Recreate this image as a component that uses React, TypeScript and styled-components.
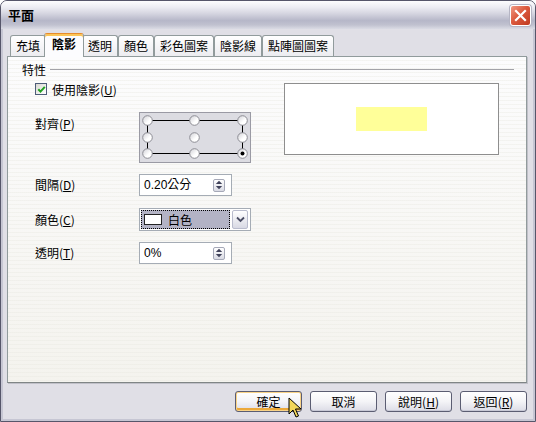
import React from 'react';
import styled, { createGlobalStyle } from 'styled-components';

const FONT = `"Noto Sans CJK TC", "Liberation Sans", sans-serif`;

const Global = createGlobalStyle`
  html, body { margin: 0; padding: 0; background: #ffffff; }
  body { font-family: ${FONT}; font-size: 12px; color: #000; }
  * { box-sizing: border-box; }
  u { text-decoration-thickness: 1px; text-underline-offset: 1px; }
`;

const Window = styled.div`
  position: relative;
  width: 536px;
  height: 422px;
  display: flex;
  flex-direction: column;
  border: 1px solid #56566a;
  border-radius: 7px 7px 0 0;
  overflow: hidden;
  background: #e0dfe6;
`;

const TitleBar = styled.div`
  height: 28px;
  flex: none;
  display: flex;
  align-items: center;
  justify-content: space-between;
  padding: 0 4px 0 7px;
  background: linear-gradient(#fdfdfe 0%, #ededf3 22%, #d5d5e0 45%, #b6b7c8 70%, #c0c1cf 85%, #dadbe4 100%);
`;

const Title = styled.div`
  font-weight: bold;
  font-size: 13px;
  line-height: 14px;
  color: #000;
`;

const CloseButton = styled.div`
  width: 21px;
  height: 21px;
  border: 1px solid #ffffff;
  border-radius: 3px;
  background: linear-gradient(135deg, #f09a84 0%, #dc5a3e 45%, #c03a20 100%);
  box-shadow: 0 0 0 1px #b5b5c4;
  display: flex;
  align-items: center;
  justify-content: center;
`;

const Body = styled.div`
  flex: 1;
  display: flex;
  flex-direction: column;
  border: 2px solid #c6c6d3;
  border-top: none;
  padding: 4px 6px 7px 4px;
`;

const TabStrip = styled.div`
  height: 23px;
  flex: none;
  display: flex;
  align-items: flex-end;
  padding-left: 3px;
  position: relative;
  z-index: 1;
`;

const Tab = styled.div<{ $active?: boolean }>`
  height: ${p => (p.$active ? '24px' : '21px')};
  margin: ${p => (p.$active ? '0 -2px -1px -2px' : '0')};
  padding: ${p => (p.$active ? '2px 7px 0' : '2px 5px 0')};
  border: 1px solid #919b9c;
  border-bottom: none;
  border-top-color: ${p => (p.$active ? '#e68b2c' : '#919b9c')};
  border-radius: 3px 3px 0 0;
  background: ${p => (p.$active ? '#fcfcfe' : 'linear-gradient(#ffffff, #ececf0)')};
  box-shadow: ${p => (p.$active ? 'inset 0 2px 0 #fbc456' : 'none')};
  font-weight: ${p => (p.$active ? 'bold' : 'normal')};
  line-height: 16px;
  white-space: nowrap;
  position: relative;
  z-index: ${p => (p.$active ? 2 : 1)};
`;

const Panel = styled.div`
  flex: 1;
  border: 1px solid #919b9c;
  border-bottom-color: #7f8585;
  box-shadow: 1px 1px 0 #c0c0c8;
  background:
    repeating-linear-gradient(180deg, rgba(255,255,255,0) 0px, rgba(255,255,255,0) 3px, rgba(230,230,222,0.35) 3px, rgba(230,230,222,0.35) 4px),
    linear-gradient(#fcfcfd, #f4f3ee);
  padding: 5px 12px 0 14px;
`;

const GroupHeader = styled.div`
  height: 14px;
  display: flex;
  align-items: center;
  gap: 4px;
`;

const HeaderLine = styled.div`
  flex: 1;
  height: 1px;
  background: #a3a3a8;
`;

const Section = styled.div`
  display: flex;
  align-items: flex-start;
  padding-left: 13px;
  margin-top: 6px;
`;

const LeftCol = styled.div`
  width: 216px;
  display: flex;
  flex-direction: column;
`;

const CheckRow = styled.div`
  height: 14px;
  display: flex;
  align-items: center;
  gap: 5px;
`;

const CheckBox = styled.div`
  width: 12px;
  height: 12px;
  border: 1px solid #4d5c78;
  background: linear-gradient(135deg, #d8d8d2, #ffffff);
  display: flex;
  align-items: center;
  justify-content: center;
`;

const FormRow = styled.div<{ $top: number; $align?: string }>`
  display: flex;
  align-items: ${p => p.$align || 'center'};
  margin-top: ${p => p.$top}px;
`;

const Label = styled.div<{ $padTop?: number }>`
  width: 104px;
  flex: none;
  line-height: 14px;
  padding-top: ${p => p.$padTop || 0}px;
  white-space: nowrap;
`;

const PositionBox = styled.div`
  width: 112px;
  height: 51px;
  border: 1px solid #9a9aa4;
  background: #dcdce2;
  display: flex;
`;

const SpinField = styled.div`
  width: 93px;
  height: 22px;
  border: 1px solid #a5acb5;
  background: #ffffff;
  display: flex;
  align-items: center;
  padding: 0 6px 0 4px;
`;

const FieldText = styled.div`
  flex: 1;
  line-height: 14px;
  font-family: "Liberation Sans", "Noto Sans CJK TC", sans-serif;
  white-space: nowrap;
`;

const SpinButton = styled.div`
  width: 12px;
  height: 13px;
  border: 1px solid #a6a9b8;
  border-radius: 2px;
  background: linear-gradient(#ffffff, #dadbe4);
  display: flex;
  align-items: center;
  justify-content: center;
`;

const Combo = styled.div`
  width: 114px;
  height: 23px;
  border: 1px solid #a5acb5;
  background: #ffffff;
  display: flex;
  align-items: center;
  padding: 1px 2px 1px 1px;
  gap: 2px;
`;

const ComboValue = styled.div`
  flex: 1;
  height: 19px;
  border: 1px dotted #000;
  background: #b3b3c5;
  display: flex;
  align-items: center;
  gap: 6px;
  padding-left: 2px;
`;

const Swatch = styled.div<{ $color: string }>`
  width: 18px;
  height: 11px;
  border: 1px solid #222;
  background: ${p => p.$color};
`;

const ComboButton = styled.div`
  width: 16px;
  height: 19px;
  border: 1px solid #b9bccd;
  border-radius: 2px;
  background: linear-gradient(#ffffff, #d8d9e4);
  display: flex;
  align-items: center;
  justify-content: center;
`;

const Preview = styled.div`
  width: 215px;
  height: 72px;
  margin: 1px 0 0 33px;
  border: 1px solid #8e8e8e;
  background: #ffffff;
  display: flex;
  align-items: center;
  justify-content: center;
`;

const PreviewShape = styled.div`
  width: 71px;
  height: 24px;
  background: #ffff99;
`;

const ButtonRow = styled.div`
  height: 21px;
  margin-top: 8px;
  flex: none;
  display: flex;
  justify-content: flex-end;
  gap: 8px;
`;

const Button = styled.div<{ $default?: boolean }>`
  width: 67px;
  height: 21px;
  border: 1px solid #5b5d72;
  border-radius: 3px;
  background: linear-gradient(#ffffff 0%, #f4f4f7 50%, #dcdce6 100%);
  box-shadow: ${p => (p.$default ? 'inset 0 0 0 1px #f9d387, inset 0 -2px 0 1px #eca93a' : 'inset 0 -1px 0 #c8c9d6')};
  display: flex;
  align-items: center;
  justify-content: center;
  line-height: 14px;
`;

const Cursor = styled.svg`
  position: absolute;
  left: 287px;
  top: 396px;
`;

const Mn: React.FC<{ text: string; k: string }> = ({ text, k }) => (
  <>
    {text}(<u>{k}</u>)
  </>
);

const Circle: React.FC<{ x: number; y: number; on?: boolean }> = ({ x, y, on }) => (
  <g>
    <circle cx={x} cy={y} r={4.8} fill="url(#rg)" stroke="#8c8c94" strokeWidth={1} />
    {on && <circle cx={x} cy={y} r={2} fill="#000" />}
  </g>
);

const PositionGrid: React.FC = () => {
  const xs = [7.5, 54.5, 102.5];
  const ys = [7.5, 24.5, 40.5];
  return (
    <svg width="110" height="49" viewBox="0 0 110 49">
      <defs>
        <linearGradient id="rg" x1="0" y1="0" x2="1" y2="1">
          <stop offset="0" stopColor="#d0d0d6" />
          <stop offset="0.6" stopColor="#ffffff" />
          <stop offset="1" stopColor="#ffffff" />
        </linearGradient>
      </defs>
      <line x1={xs[0]} y1={ys[0]} x2={xs[2]} y2={ys[0]} stroke="#000" strokeWidth={1} />
      <line x1={xs[0]} y1={ys[2]} x2={xs[2]} y2={ys[2]} stroke="#000" strokeWidth={1} />
      <line x1={xs[0]} y1={ys[0]} x2={xs[0]} y2={ys[2]} stroke="#000" strokeWidth={1} />
      <line x1={xs[2]} y1={ys[0]} x2={xs[2]} y2={ys[2]} stroke="#000" strokeWidth={1} />
      {ys.map((y, ri) =>
        xs.map((x, ci) => <Circle key={`${ri}-${ci}`} x={x} y={y} on={ri === 2 && ci === 2} />)
      )}
    </svg>
  );
};

const SpinArrows: React.FC = () => (
  <svg width="8" height="10" viewBox="0 0 8 10">
    <path d="M4 0.8 L7.2 4 L0.8 4 Z" fill="#40425a" />
    <path d="M0.8 6 L7.2 6 L4 9.2 Z" fill="#40425a" />
  </svg>
);

const Spin: React.FC<{ value: string }> = ({ value }) => (
  <SpinField>
    <FieldText>{value}</FieldText>
    <SpinButton>
      <SpinArrows />
    </SpinButton>
  </SpinField>
);

const tabs = ['充填', '陰影', '透明', '顏色', '彩色圖案', '陰影線', '點陣圖圖案'];

export default function App() {
  return (
    <>
      <Global />
      <Window>
        <TitleBar>
          <Title>平面</Title>
          <CloseButton>
            <svg width="13" height="13" viewBox="0 0 13 13">
              <path d="M2 2 L11 11 M11 2 L2 11" stroke="#ffffff" strokeWidth={2.2} strokeLinecap="square" />
            </svg>
          </CloseButton>
        </TitleBar>
        <Body>
          <TabStrip>
            {tabs.map(t => (
              <Tab key={t} $active={t === '陰影'}>
                {t}
              </Tab>
            ))}
          </TabStrip>
          <Panel>
            <GroupHeader>
              <span>特性</span>
              <HeaderLine />
            </GroupHeader>
            <Section>
              <LeftCol>
                <CheckRow>
                  <CheckBox>
                    <svg width="9" height="9" viewBox="0 0 9 9">
                      <path d="M1.3 4.3 L3.5 6.6 L7.8 1.8" stroke="#21a121" strokeWidth={2} fill="none" />
                    </svg>
                  </CheckBox>
                  <span>
                    <Mn text="使用陰影" k="U" />
                  </span>
                </CheckRow>
                <FormRow $top={16} $align="flex-start">
                  <Label $padTop={5}>
                    <Mn text="對齊" k="P" />
                  </Label>
                  <PositionBox>
                    <PositionGrid />
                  </PositionBox>
                </FormRow>
                <FormRow $top={11}>
                  <Label>
                    <Mn text="間隔" k="D" />
                  </Label>
                  <Spin value="0.20公分" />
                </FormRow>
                <FormRow $top={12}>
                  <Label>
                    <Mn text="顏色" k="C" />
                  </Label>
                  <Combo>
                    <ComboValue>
                      <Swatch $color="#ffffff" />
                      <span>白色</span>
                    </ComboValue>
                    <ComboButton>
                      <svg width="9" height="7" viewBox="0 0 9 7">
                        <path d="M1 1.5 L4.5 5 L8 1.5" stroke="#4a4d63" strokeWidth={1.8} fill="none" />
                      </svg>
                    </ComboButton>
                  </Combo>
                </FormRow>
                <FormRow $top={11}>
                  <Label>
                    <Mn text="透明" k="T" />
                  </Label>
                  <Spin value="0%" />
                </FormRow>
              </LeftCol>
              <Preview>
                <PreviewShape />
              </Preview>
            </Section>
          </Panel>
          <ButtonRow>
            <Button $default>確定</Button>
            <Button>取消</Button>
            <Button>
              <Mn text="說明" k="H" />
            </Button>
            <Button>
              <Mn text="返回" k="R" />
            </Button>
          </ButtonRow>
        </Body>
        <Cursor width="14" height="22" viewBox="0 0 14 22">
          <path d="M1 1 L1 17 L5 13 L8 20 L10.5 19 L7.5 12 L13 12 Z" fill="#f2d65a" stroke="#000" strokeWidth={1} strokeLinejoin="round" />
        </Cursor>
      </Window>
    </>
  );
}
